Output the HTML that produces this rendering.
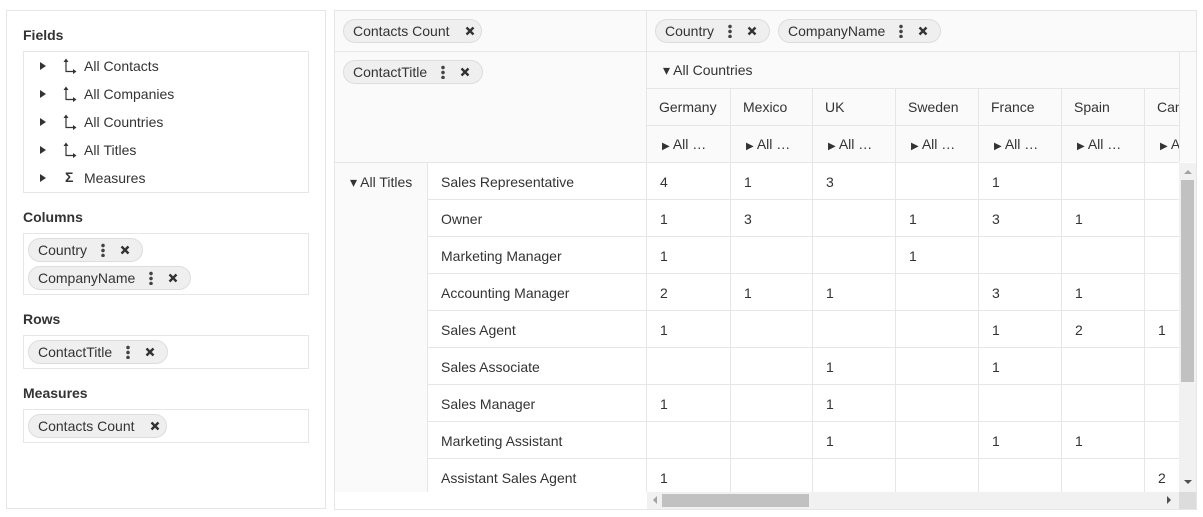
<!DOCTYPE html>
<html><head><meta charset="utf-8"><style>
*{box-sizing:border-box;margin:0;padding:0}
body{width:1203px;height:517px;background:#fff;font-family:"Liberation Sans",Arial,sans-serif;font-size:14px;color:#333;position:relative;overflow:hidden}
.a{position:absolute}
.lbl{position:absolute;left:23px;font-weight:bold;font-size:14px;color:#333}
.box{position:absolute;left:23px;width:286px;border:1px solid #e6e6e6}
.chip{position:absolute;height:24px;border:1px solid #ddd;border-radius:12px;background:#efefef;display:flex;align-items:center;padding-left:9px;white-space:nowrap;font-size:14px;color:#333}
.dots{flex-shrink:0;display:inline-block;width:4px;height:14px;margin-left:14px;background:radial-gradient(circle,#444 1.6px,transparent 2px) 0 0/4px 5px repeat-y}
.x{flex-shrink:0;display:inline-block;margin-left:15px;width:10px;height:10px}
.tree{position:absolute;left:40px;font-size:14px}
.tri{position:absolute;left:0;top:4px;width:0;height:0;border-left:6px solid #333;border-top:4px solid transparent;border-bottom:4px solid transparent}
.hdr{position:absolute;background:#fafafa}
table{border-collapse:collapse;table-layout:fixed;width:860px}
td{height:37px;border:1px solid #e6e6e6;padding-left:13px;padding-top:1px;vertical-align:middle;font-size:14px;color:#333;white-space:nowrap;overflow:hidden}
</style></head><body>
<svg width="0" height="0" style="position:absolute"><defs><g id="xx"><path d="M1.5 1.5L8.5 8.5M8.5 1.5L1.5 8.5" stroke="#333" stroke-width="2.4"/></g><g id="ax"><path d="M3 3V13.5H11" stroke="#333" stroke-width="1.2" fill="none"/><path d="M0.5 4L3 0.5L5.5 4Z M10 11L13.5 13.5L10 16Z" fill="#333"/></g></defs></svg>

<div class="a" style="left:6px;top:10px;width:320px;height:499px;border:1px solid #e6e6e6"></div>
<div class="lbl" style="top:27px">Fields</div>
<div class="box" style="top:51px;height:142px"></div>
<div class="tree" style="top:58px"><span class="tri"></span><svg class="a" style="left:23px;top:0" width="14" height="17"><use href="#ax"/></svg><span class="a" style="left:44px">All&nbsp;Contacts</span></div>
<div class="tree" style="top:86px"><span class="tri"></span><svg class="a" style="left:23px;top:0" width="14" height="17"><use href="#ax"/></svg><span class="a" style="left:44px">All&nbsp;Companies</span></div>
<div class="tree" style="top:114px"><span class="tri"></span><svg class="a" style="left:23px;top:0" width="14" height="17"><use href="#ax"/></svg><span class="a" style="left:44px">All&nbsp;Countries</span></div>
<div class="tree" style="top:142px"><span class="tri"></span><svg class="a" style="left:23px;top:0" width="14" height="17"><use href="#ax"/></svg><span class="a" style="left:44px">All&nbsp;Titles</span></div>
<div class="tree" style="top:170px"><span class="tri"></span><span class="a" style="left:25px;top:-1px;font-weight:bold">Σ</span><span class="a" style="left:44px">Measures</span></div>

<div class="lbl" style="top:209px">Columns</div>
<div class="box" style="top:233px;height:62px"></div>
<div class="chip" style="left:28px;top:238px;width:115px">Country<span class="dots"></span><svg class="x" viewBox="0 0 10 10"><use href="#xx"/></svg></div>
<div class="chip" style="left:28px;top:266px;width:163px">CompanyName<span class="dots"></span><svg class="x" viewBox="0 0 10 10"><use href="#xx"/></svg></div>

<div class="lbl" style="top:311px">Rows</div>
<div class="box" style="top:335px;height:34px"></div>
<div class="chip" style="left:28px;top:340px;width:140px">ContactTitle<span class="dots"></span><svg class="x" viewBox="0 0 10 10"><use href="#xx"/></svg></div>

<div class="lbl" style="top:385px">Measures</div>
<div class="box" style="top:409px;height:34px"></div>
<div class="chip" style="left:28px;top:414px;width:139px">Contacts Count<svg class="x" viewBox="0 0 10 10"><use href="#xx"/></svg></div>

<div class="a" style="left:334px;top:10px;width:863px;height:500px;border:1px solid #e6e6e6;background:#fff"></div>
<div class="hdr" style="left:335px;top:11px;width:861px;height:151px"></div>
<div class="a" style="left:335px;top:51px;width:861px;height:1px;background:#e6e6e6"></div>
<div class="a" style="left:646px;top:11px;width:1px;height:151px;background:#e6e6e6"></div>
<div class="a" style="left:646px;top:88px;width:533px;height:1px;background:#e6e6e6"></div>
<div class="a" style="left:646px;top:125px;width:533px;height:1px;background:#e6e6e6"></div>
<div class="a" style="left:1179px;top:51px;width:1px;height:111px;background:#e6e6e6"></div>
<div class="a" style="left:730px;top:88px;width:1px;height:74px;background:#e6e6e6"></div>
<div class="a" style="left:812px;top:88px;width:1px;height:74px;background:#e6e6e6"></div>
<div class="a" style="left:895px;top:88px;width:1px;height:74px;background:#e6e6e6"></div>
<div class="a" style="left:978px;top:88px;width:1px;height:74px;background:#e6e6e6"></div>
<div class="a" style="left:1061px;top:88px;width:1px;height:74px;background:#e6e6e6"></div>
<div class="a" style="left:1144px;top:88px;width:1px;height:74px;background:#e6e6e6"></div>

<div class="chip" style="left:343px;top:19px;width:139px">Contacts Count<svg class="x" viewBox="0 0 10 10"><use href="#xx"/></svg></div>
<div class="chip" style="left:655px;top:19px;width:115px">Country<span class="dots"></span><svg class="x" viewBox="0 0 10 10"><use href="#xx"/></svg></div>
<div class="chip" style="left:778px;top:19px;width:163px">CompanyName<span class="dots"></span><svg class="x" viewBox="0 0 10 10"><use href="#xx"/></svg></div>
<div class="chip" style="left:343px;top:60px;width:140px">ContactTitle<span class="dots"></span><svg class="x" viewBox="0 0 10 10"><use href="#xx"/></svg></div>

<div class="a" style="left:663px;top:62px">▾ All Countries</div>
<div class="a" style="left:659px;top:99px">Germany</div>
<div class="a" style="left:743px;top:99px">Mexico</div>
<div class="a" style="left:825px;top:99px">UK</div>
<div class="a" style="left:908px;top:99px">Sweden</div>
<div class="a" style="left:991px;top:99px">France</div>
<div class="a" style="left:1074px;top:99px">Spain</div>
<div class="a" style="left:1157px;top:99px;width:22px;overflow:hidden">Canada</div>
<div class="a" style="left:662px;top:136px"><span style="font-size:10px">▶</span> All …</div>
<div class="a" style="left:746px;top:136px"><span style="font-size:10px">▶</span> All …</div>
<div class="a" style="left:828px;top:136px"><span style="font-size:10px">▶</span> All …</div>
<div class="a" style="left:911px;top:136px"><span style="font-size:10px">▶</span> All …</div>
<div class="a" style="left:994px;top:136px"><span style="font-size:10px">▶</span> All …</div>
<div class="a" style="left:1077px;top:136px"><span style="font-size:10px">▶</span> All …</div>
<div class="a" style="left:1160px;top:136px;width:19px;overflow:hidden;white-space:nowrap"><span style="font-size:10px">▶</span> All …</div>

<div class="a" style="left:335px;top:162px;width:844px;height:330px;overflow:hidden">
<table style="margin-left:-1px">
<colgroup><col style="width:93px"><col style="width:219px"><col style="width:84px"><col style="width:82px"><col style="width:83px"><col style="width:83px"><col style="width:83px"><col style="width:83px"><col style="width:50px"></colgroup>
<tr><td rowspan="9" style="vertical-align:top;padding-top:11px;padding-left:15px;background:#fafafa">▾ All Titles</td><td>Sales Representative</td><td>4</td><td>1</td><td>3</td><td></td><td>1</td><td></td><td></td></tr>
<tr><td>Owner</td><td>1</td><td>3</td><td></td><td>1</td><td>3</td><td>1</td><td></td></tr>
<tr><td>Marketing Manager</td><td>1</td><td></td><td></td><td>1</td><td></td><td></td><td></td></tr>
<tr><td>Accounting Manager</td><td>2</td><td>1</td><td>1</td><td></td><td>3</td><td>1</td><td></td></tr>
<tr><td>Sales Agent</td><td>1</td><td></td><td></td><td></td><td>1</td><td>2</td><td>1</td></tr>
<tr><td>Sales Associate</td><td></td><td></td><td>1</td><td></td><td>1</td><td></td><td></td></tr>
<tr><td>Sales Manager</td><td>1</td><td></td><td>1</td><td></td><td></td><td></td><td></td></tr>
<tr><td>Marketing Assistant</td><td></td><td></td><td>1</td><td></td><td>1</td><td>1</td><td></td></tr>
<tr><td>Assistant Sales Agent</td><td>1</td><td></td><td></td><td></td><td></td><td></td><td>2</td></tr>
</table></div>

<div class="a" style="left:1179px;top:163px;width:17px;height:329px;background:#f1f1f1"></div>
<div class="a" style="left:1181px;top:180px;width:13px;height:202px;background:#c1c1c1"></div>
<div class="a" style="left:1184px;top:170px;border-left:4px solid transparent;border-right:4px solid transparent;border-bottom:4px solid #a3a3a3"></div>
<div class="a" style="left:1184px;top:480px;border-left:4px solid transparent;border-right:4px solid transparent;border-top:4px solid #505050"></div>
<div class="a" style="left:647px;top:492px;width:532px;height:17px;background:#f1f1f1"></div>
<div class="a" style="left:662px;top:494px;width:147px;height:13px;background:#c1c1c1"></div>
<div class="a" style="left:653px;top:496px;border-top:4px solid transparent;border-bottom:4px solid transparent;border-right:4px solid #a3a3a3"></div>
<div class="a" style="left:1167px;top:496px;border-top:4px solid transparent;border-bottom:4px solid transparent;border-left:4px solid #505050"></div>
<div class="a" style="left:1179px;top:492px;width:17px;height:17px;background:#dcdcdc"></div>
</body></html>
